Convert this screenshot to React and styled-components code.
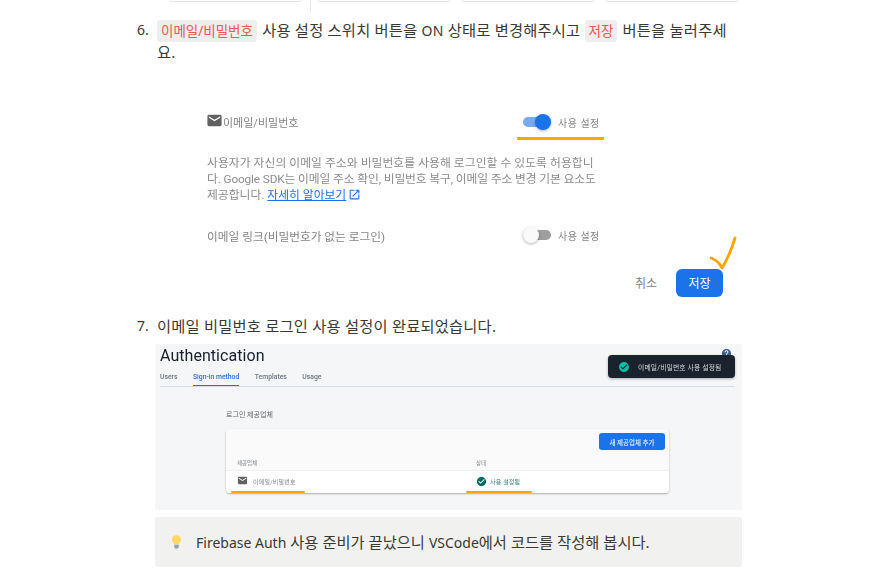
import React from 'react'
import styled, { createGlobalStyle } from 'styled-components'
import { MdEmail, MdOpenInNew, MdCheckCircle, MdHelp } from 'react-icons/md'

const Global = createGlobalStyle`
  html, body { margin: 0; padding: 0; background: #fff; overflow: hidden; }
  body { font-family: "Noto Sans", "Noto Sans CJK KR", sans-serif; color: #3b3934; }
`

const Page = styled.div`
  width: 883px;
  height: 573px;
  overflow: hidden;
`

const TopRow = styled.div`
  display: flex;
  align-items: flex-start;
  height: 13px;
  padding-left: 169px;
`

const TopCard = styled.div`
  width: 132px;
  height: 2px;
  border: 1px solid #e6e6e6;
  border-top: none;
  border-radius: 0 0 4px 4px;
  box-sizing: border-box;
  margin-right: 12px;
`

const TopDivider = styled.div`
  width: 1px;
  height: 13px;
  background: #e9e9e7;
  margin: 0 7px 0 -3px;
`

const Item = styled.div`
  display: flex;
  padding-left: 137px;
  margin-top: ${props => props.$top}px;
`

const Num = styled.div`
  width: 18px;
  font-size: 14px;
  line-height: 22px;
`

const Body = styled.div`
  width: 587px;
`

const Text = styled.div`
  padding-left: 2px;
  width: 574px;
  font-size: 15.3px;
  line-height: 22px;
  letter-spacing: 0.2px;
`

const Latin = styled.span`
  font-size: 14px;
  line-height: 1;
`

const Code = styled.span`
  background: #eeeeec;
  color: #eb5757;
  border-radius: 3px;
  padding: 2px 4px;
  font-size: 13.5px;
  line-height: 1;
  letter-spacing: 0;
  margin-right: 1px;
`

const Settings = styled.div`
  margin-top: 47px;
  padding-left: 52px;
  font-family: Roboto, "Noto Sans CJK KR", sans-serif;
  filter: blur(0.25px);
`

const SettingRow = styled.div`
  display: grid;
  grid-template-columns: 316px auto;
  align-items: center;
  height: 24px;
  margin-top: ${props => props.$top || 0}px;
  font-size: 11px;
  color: #757575;
`

const RowLabel = styled.div`
  display: flex;
  align-items: center;
  font-size: ${props => props.$size || 11}px;
  color: #858585;
`

const MailIcon = styled(MdEmail)`
  color: #616161;
  font-size: ${props => props.$size}px;
  margin: ${props => props.$margin};
  flex: none;
`

const ToggleWrap = styled.div`
  display: flex;
  align-items: center;
  gap: 7px;
  position: relative;
  font-size: 10px;
  letter-spacing: 0.5px;
  color: #858585;
`

const Track = styled.div`
  width: 28px;
  height: 10px;
  border-radius: 5px;
  background: ${props => props.$on ? '#7aaaf2' : '#9e9e9e'};
  position: relative;
`

const Thumb = styled.div`
  position: absolute;
  top: -3px;
  ${props => props.$on ? 'right: 0;' : 'left: 0;'}
  width: 16px;
  height: 16px;
  border-radius: 50%;
  background: ${props => props.$on ? '#1a73e8' : '#fafafa'};
  box-shadow: 0 1px 3px rgba(0, 0, 0, 0.3);
`

const Underline = styled.div`
  position: absolute;
  left: ${props => props.$left}px;
  bottom: ${props => props.$bottom}px;
  width: ${props => props.$width}px;
  height: ${props => props.$height || 3}px;
  background: #ffa500;
  border-radius: 1px;
`

const Para = styled.div`
  margin-top: 21px;
  font-size: 11.8px;
  line-height: 16px;
  color: #8c8c8c;
  white-space: nowrap;
`

const ParaLine = styled.div`
  letter-spacing: ${props => props.$spacing || 0}px;
`

const DocLink = styled.span`
  color: #1a73e8;
  text-decoration: underline;
`

const LinkIcon = styled(MdOpenInNew)`
  color: #1a73e8;
  font-size: 13px;
  vertical-align: -2px;
  margin-left: 2px;
`

const Actions = styled.div`
  display: flex;
  justify-content: flex-end;
  align-items: center;
  gap: 19px;
  margin-top: 22px;
  padding-right: 19px;
  position: relative;
`

const Cancel = styled.div`
  font-size: 12px;
  color: #858585;
`

const SaveButton = styled.div`
  width: 47px;
  height: 28px;
  border-radius: 6px;
  background: #1a73e8;
  color: #fff;
  font-size: 12px;
  display: flex;
  align-items: center;
  justify-content: center;
`

const CheckMark = styled.svg`
  position: absolute;
  right: 4px;
  top: -33px;
`

const Shot = styled.div`
  margin-top: 7px;
  height: 166px;
  background: #f5f6f8;
  padding: 2px 7px 0 5px;
  box-sizing: border-box;
  position: relative;
  font-family: Roboto, "Noto Sans CJK KR", sans-serif;
  filter: blur(0.3px);
`

const AuthTitle = styled.div`
  font-size: 16px;
  line-height: 20px;
  color: #14202e;
  letter-spacing: 0.05px;
`

const Tabs = styled.div`
  display: flex;
  gap: 15.5px;
  height: 18px;
  margin-top: 2px;
  border-bottom: 1px solid #d3deea;
`

const Tab = styled.div`
  font-size: 6.8px;
  line-height: 18px;
  font-weight: 500;
  height: 17px;
  color: ${props => props.$active ? '#2a6fdb' : '#6d7480'};
  border-bottom: ${props => props.$active ? '1px solid #1a73e8' : 'none'};
`

const Heading = styled.div`
  margin: 22px 0 0 66px;
  font-size: 7px;
  line-height: 12px;
  color: #5f6368;
`

const ProviderCard = styled.div`
  width: 443px;
  height: 64px;
  margin: 8px 0 0 66px;
  background: #fafafa;
  border-radius: 4px;
  box-shadow: 0 1px 2px rgba(0, 0, 0, 0.3);
  overflow: hidden;
  display: flex;
  flex-direction: column;
`

const CardTop = styled.div`
  display: flex;
  justify-content: flex-end;
  padding: 4px 4px 0 0;
`

const AddButton = styled.div`
  width: 66px;
  height: 17px;
  background: #1a73e8;
  border-radius: 3px;
  color: #e8f0fe;
  font-size: 6.5px;
  font-weight: 500;
  display: flex;
  align-items: center;
  justify-content: center;
`

const TableHead = styled.div`
  display: grid;
  grid-template-columns: 239px 1fr;
  padding-left: 11px;
  margin-top: 8px;
  font-size: 5.5px;
  line-height: 10px;
  height: 12px;
  color: #80868b;
  border-bottom: 1px solid #f0f0f0;
`

const TableRow = styled.div`
  display: grid;
  grid-template-columns: 239px 1fr;
  align-items: center;
  padding: 0 0 2px 11px;
  flex: 1;
  background: #fff;
  position: relative;
`

const Cell = styled.div`
  display: flex;
  align-items: center;
  gap: ${props => props.$gap}px;
  font-size: 6px;
  letter-spacing: 0.2px;
  color: ${props => props.$color};
`

const StatusIcon = styled(MdCheckCircle)`
  color: #00695c;
  font-size: 11px;
`

const Toast = styled.div`
  position: absolute;
  left: 453px;
  top: 11px;
  width: 127px;
  height: 23px;
  background: #1a222d;
  border-radius: 4px;
  box-shadow: 0 1px 3px rgba(0, 0, 0, 0.3);
  display: flex;
  align-items: center;
  gap: 8px;
  padding-left: 10px;
  box-sizing: border-box;
  color: #d8dce0;
  font-size: 6.8px;
  letter-spacing: 0.15px;
`

const ToastIcon = styled(MdCheckCircle)`
  color: #00bfa5;
  font-size: 12px;
`

const HelpIcon = styled(MdHelp)`
  position: absolute;
  left: 566px;
  top: 4px;
  color: #3f5f87;
  font-size: 11px;
`

const Callout = styled.div`
  margin-top: 7px;
  height: 50px;
  background: #f1f1ef;
  border-radius: 3px;
  display: flex;
  align-items: center;
  padding-left: 16px;
  font-size: 15.3px;
`

const CalloutText = styled.div`
  white-space: pre;
  padding-bottom: 3px;
`

const Bulb = styled.svg`
  margin-right: 14px;
  flex: none;
`

export default function App() {
  return (
    <Page>
      <Global />
      <TopRow>
        <TopCard />
        <TopDivider />
        <TopCard />
        <TopCard />
        <TopCard />
      </TopRow>

      <Item $top={6}>
        <Num>6.</Num>
        <Body>
          <Text>
            <Code>이메일/비밀번호</Code> 사용 설정 스위치 버튼을 <Latin>ON</Latin> 상태로 변경해주시고 <Code>저장</Code> 버튼을 눌러주세요.
          </Text>
          <Settings>
            <SettingRow>
              <RowLabel>
                <MailIcon $size={17} $margin="-3px 0 0 -1px" />
                이메일/비밀번호
              </RowLabel>
              <ToggleWrap>
                <Track $on><Thumb $on /></Track>
                사용 설정
                <Underline $left={-6} $bottom={-10} $width={87} />
              </ToggleWrap>
            </SettingRow>
            <Para>
              <ParaLine $spacing={0.05}>사용자가 자신의 이메일 주소와 비밀번호를 사용해 로그인할 수 있도록 허용합니</ParaLine>
              <ParaLine $spacing={-0.13}>다. Google SDK는 이메일 주소 확인, 비밀번호 복구, 이메일 주소 변경 기본 요소도</ParaLine>
              <ParaLine>제공합니다. <DocLink>자세히 알아보기</DocLink><LinkIcon /></ParaLine>
            </Para>
            <SettingRow $top={20}>
              <RowLabel $size={11.7}>이메일 링크(비밀번호가 없는 로그인)</RowLabel>
              <ToggleWrap>
                <Track><Thumb /></Track>
                사용 설정
              </ToggleWrap>
            </SettingRow>
          </Settings>
          <Actions>
            <Cancel>취소</Cancel>
            <SaveButton>저장</SaveButton>
            <CheckMark width="30" height="36" viewBox="0 0 30 36">
              <path d="M3 22 C6 23 11 26 14 32 C19 24 24 12 27 2" fill="none" stroke="#ffa500" strokeWidth="2.8" strokeLinecap="round" strokeLinejoin="round" />
            </CheckMark>
          </Actions>
        </Body>
      </Item>

      <Item $top={18}>
        <Num>7.</Num>
        <Body>
          <Text>이메일 비밀번호 로그인 사용 설정이 완료되었습니다.</Text>
          <Shot>
            <AuthTitle>Authentication</AuthTitle>
            <Tabs>
              <Tab>Users</Tab>
              <Tab $active>Sign-in method</Tab>
              <Tab>Templates</Tab>
              <Tab>Usage</Tab>
            </Tabs>
            <Heading>로그인 제공업체</Heading>
            <ProviderCard>
              <CardTop>
                <AddButton>새 제공업체 추가</AddButton>
              </CardTop>
              <TableHead>
                <div>제공업체</div>
                <div>상태</div>
              </TableHead>
              <TableRow>
                <Cell $gap={5} $color="#80868b">
                  <MailIcon $size={11} $margin="-2px 0 0 0" />
                  이메일/비밀번호
                </Cell>
                <Cell $gap={3} $color="#2e7d6f">
                  <StatusIcon />
                  사용 설정됨
                </Cell>
                <Underline $left={5} $bottom={0} $width={74} $height={2} />
                <Underline $left={240} $bottom={0} $width={66} $height={2} />
              </TableRow>
            </ProviderCard>
            <HelpIcon />
            <Toast>
              <ToastIcon />
              이메일/비밀번호 사용 설정됨
            </Toast>
          </Shot>
          <Callout>
            <Bulb width="11" height="16" viewBox="0 0 12 16">
              <path d="M6 0.5 C2.8 0.5 1 2.8 1 5.2 C1 7.6 2.8 8.6 3.4 10.6 L8.6 10.6 C9.2 8.6 11 7.6 11 5.2 C11 2.8 9.2 0.5 6 0.5 Z" fill="#ffd766" />
              <rect x="3.5" y="11" width="5" height="3.6" rx="0.8" fill="#8fa3b5" />
              <rect x="4.5" y="14.6" width="3" height="1.2" rx="0.6" fill="#b8c4ce" />
            </Bulb>
            <CalloutText><Latin>Firebase Auth</Latin> 사용 준비가 끝났으니 <Latin>VSCode</Latin>에서 코드를 작성해 봅시다.</CalloutText>
          </Callout>
        </Body>
      </Item>
    </Page>
  )
}
